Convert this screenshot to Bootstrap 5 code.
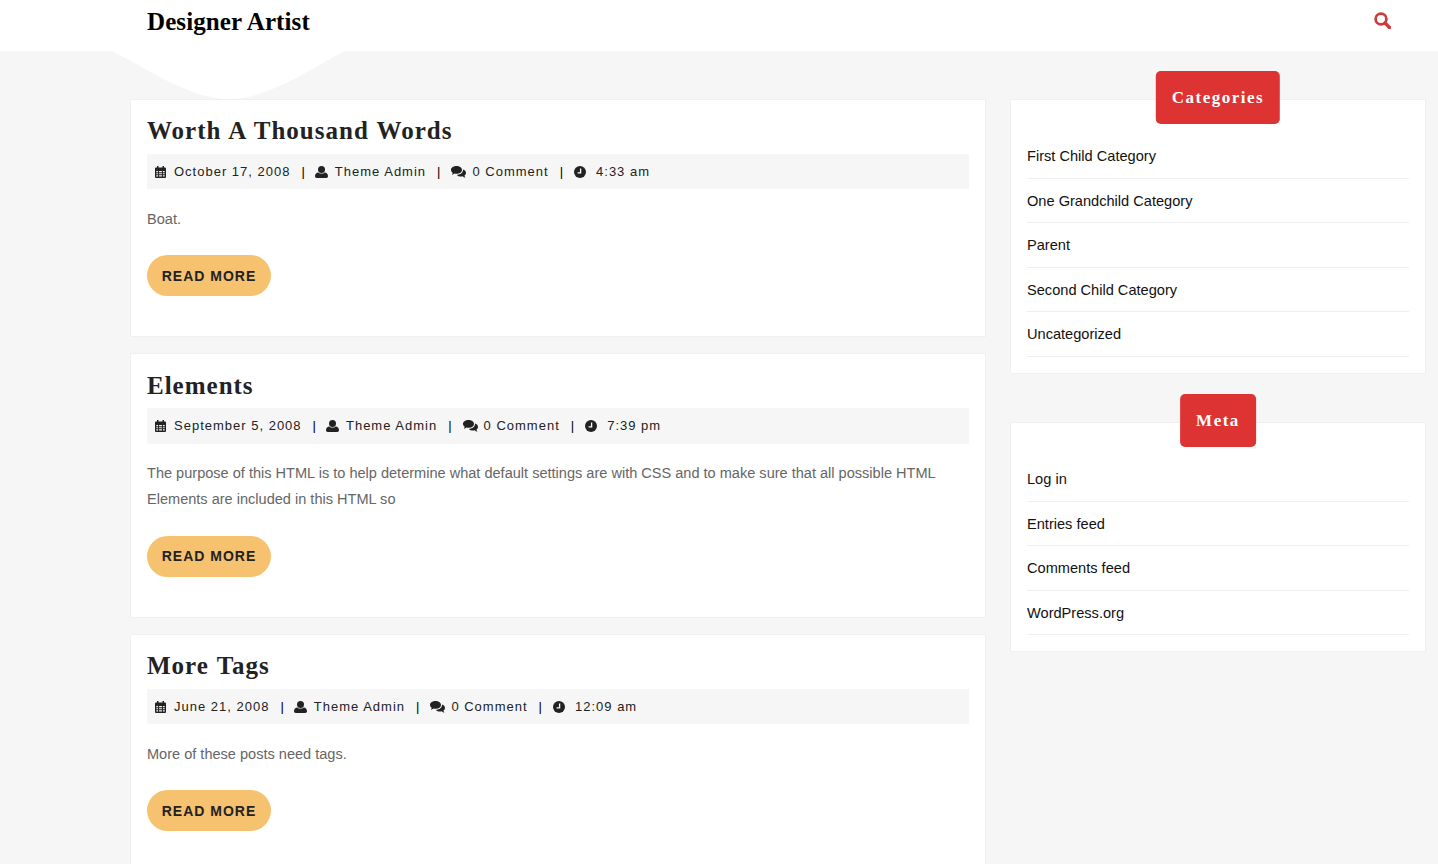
<!DOCTYPE html>
<html lang="en">
<head>
<meta charset="utf-8">
<title>Designer Artist</title>
<link href="https://cdn.jsdelivr.net/npm/bootstrap@5.3.0/dist/css/bootstrap.min.css" rel="stylesheet">
<style>
html,body{height:864px;overflow:hidden}
body{background:#f6f6f6;font-family:"Liberation Sans",Arial,sans-serif;color:#222}
.top-head{height:51px;background:#fff;padding:0 47px 0 147px}
.brand-name{font:700 25px/44px "Liberation Serif","Times New Roman",serif;color:#000;letter-spacing:.1px;text-decoration:none}
.search-ico{width:17px;height:17px;margin-top:12px;display:block}
.notch{position:absolute;left:112px;top:51px;width:233px;height:48px;display:block}
.page-wrap{position:relative;padding:48px 12px 0 130px;gap:24px}
.main-col{width:856px;flex:none}
.side-col{width:416px;flex:none}
.post-box{background:#fff;border:1px solid #f0f0f0;padding:16px 16px 0;margin-bottom:16px}
.post-box.b1{height:238px}.post-box.b2{height:265px}.post-box.b3{height:300px}
.post-title{font:700 25px/30px "Liberation Serif","Times New Roman",serif;letter-spacing:1px;word-spacing:1px;color:#222;margin:0 0 8px}
.meta-bar{background:#f6f6f6;height:35px;padding:0 8px;font-size:13px;letter-spacing:1px;color:#222;display:flex;align-items:center;white-space:nowrap;margin-bottom:17px}
.meta-bar svg{flex:none;display:block}
.meta-sep{margin:0 11px;font-size:13px;letter-spacing:0;color:#000}
.mi-1{margin-right:8px}
.mi-2{margin:0 7px 0 -1px}
.mi-c{margin-right:6px}
.mi-3{margin-right:10px}
.post-text{font-size:14.55px;line-height:26px;color:#666;margin:0 0 23px}
.more-btn{display:inline-block;width:124px;height:41px;line-height:42px;text-align:center;background:#f6c26f;border-radius:21px;color:#222;font-size:14px;font-weight:700;letter-spacing:1px;text-decoration:none}
.b2 .post-title{padding-top:1px;margin-bottom:7px;height:31px}
.b2 .meta-bar{height:36px;margin-bottom:16px}
.b2 .post-text{margin-bottom:24px}
.b2 .more-btn{line-height:41px}
.side-box{position:relative;background:#fff;border:1px solid #f0f0f0;padding:34px 16px 16px 16px;margin-bottom:48.5px}
.side-tab{position:absolute;top:-29px;left:50%;transform:translateX(-50%);height:53px;padding:0 16px;background:#dd3333;border-radius:5px;color:#fff;font:700 17px/53px "Liberation Serif","Times New Roman",serif;letter-spacing:1.5px;margin:0;white-space:nowrap}
.side-list{list-style:none;margin:0;padding:0}
.side-list li{height:44.5px;border-bottom:1px solid #eee;font-size:14.6px;line-height:44px}
.side-list a{color:#111;text-decoration:none}
</style>
</head>
<body>
<header class="top-head d-flex justify-content-between align-items-start">
  <a class="brand-name" href="#">Designer Artist</a>
  <a href="#" aria-label="Search"><svg class="search-ico" viewBox="0 0 17 17"><circle cx="7" cy="7" r="5.400" fill="none" stroke="#cf3a3a" stroke-width="2.700"/><path d="M11 11l4.500 4.500" stroke="#cf3a3a" stroke-width="3.300" stroke-linecap="round"/></svg></a>
</header>
<svg class="notch" viewBox="0 0 233 48" aria-hidden="true"><path d="M0 0C38 19 78 48 117 48C156 48 196 19 233 0Z" fill="#fff"/></svg>

<svg width="0" height="0" class="position-absolute" aria-hidden="true">
  <symbol id="i-cal" viewBox="0 0 11 12"><path fill="#222" fill-rule="evenodd" d="M2 0h1.500v1.500h4V0H9v1.500h1a1 1 0 0 1 1 1V11a1 1 0 0 1-1 1H1a1 1 0 0 1-1-1V2.500a1 1 0 0 1 1-1h1zM1.300 5v1.200h1.800V5zm2.800 0v1.200h2.800V5zm3.800 0v1.200h1.800V5zM1.300 7.200v1.100h1.800V7.200zm2.800 0v1.100h2.800V7.200zm3.800 0v1.100h1.800V7.200zM1.300 9.300v1.200h1.800V9.300zm2.800 0v1.200h2.800V9.300zm3.800 0v1.200h1.800V9.300z"/></symbol>
  <symbol id="i-user" viewBox="0 0 13 12"><circle cx="6.500" cy="3.500" r="3.500" fill="#222"/><path fill="#222" d="M3.300 6.400C4.200 7.200 5.300 7.600 6.500 7.600S8.800 7.200 9.700 6.400C11.800 6.600 13 8 13 10.300C13 11.400 12.300 12 11.200 12H1.800C.7 12 0 11.400 0 10.300C0 8 1.200 6.600 3.300 6.400Z"/></symbol>
  <symbol id="i-com" viewBox="0 0 15 12"><path fill="#222" d="M5.500 0C8.500 0 11 1.700 11 3.900S8.500 7.800 5.500 7.800C4.800 7.800 4.200 7.700 3.600 7.500C2.800 8.100 1.900 8.500.8 8.700C1.300 8 1.600 7.400 1.700 6.700C.7 6 0 5 0 3.900C0 1.700 2.500 0 5.500 0Z"/><path fill="#222" d="M12 3.600C13.800 4.200 15 5.500 15 7C15 8 14.400 8.900 13.500 9.500C13.600 10.300 14 11 14.500 11.700C13.400 11.500 12.400 11 11.600 10.300C11.100 10.400 10.600 10.500 10 10.500C8.300 10.500 6.800 9.900 5.900 8.900C9.500 8.800 12.300 6.700 12 3.600Z"/></symbol>
  <symbol id="i-clock" viewBox="0 0 12 12"><circle cx="6" cy="6" r="6" fill="#222"/><path d="M6.600 2.400V6.800H3.600" fill="none" stroke="#fff" stroke-width="1.300"/></symbol>
</svg>

<div class="page-wrap d-flex align-items-start">
  <main class="main-col">
    <article class="post-box b1">
      <h2 class="post-title">Worth A Thousand Words</h2>
      <div class="meta-bar">
        <svg class="mi-1" width="11" height="12"><use href="#i-cal"/></svg><span>October 17, 2008</span><span class="meta-sep">|</span>
        <svg class="mi-2" width="13" height="12"><use href="#i-user"/></svg><span>Theme Admin</span><span class="meta-sep">|</span>
        <svg class="mi-c" width="15" height="12"><use href="#i-com"/></svg><span>0 Comment</span><span class="meta-sep">|</span>
        <svg class="mi-3" width="12" height="12"><use href="#i-clock"/></svg><span>4:33 am</span>
      </div>
      <p class="post-text">Boat.</p>
      <a class="more-btn" href="#">READ MORE</a>
    </article>
    <article class="post-box b2">
      <h2 class="post-title">Elements</h2>
      <div class="meta-bar">
        <svg class="mi-1" width="11" height="12"><use href="#i-cal"/></svg><span>September 5, 2008</span><span class="meta-sep">|</span>
        <svg class="mi-2" width="13" height="12"><use href="#i-user"/></svg><span>Theme Admin</span><span class="meta-sep">|</span>
        <svg class="mi-c" width="15" height="12"><use href="#i-com"/></svg><span>0 Comment</span><span class="meta-sep">|</span>
        <svg class="mi-3" width="12" height="12"><use href="#i-clock"/></svg><span>7:39 pm</span>
      </div>
      <p class="post-text">The purpose of this HTML is to help determine what default settings are with CSS and to make sure that all possible HTML Elements are included in this HTML so</p>
      <a class="more-btn" href="#">READ MORE</a>
    </article>
    <article class="post-box b3">
      <h2 class="post-title">More Tags</h2>
      <div class="meta-bar">
        <svg class="mi-1" width="11" height="12"><use href="#i-cal"/></svg><span>June 21, 2008</span><span class="meta-sep">|</span>
        <svg class="mi-2" width="13" height="12"><use href="#i-user"/></svg><span>Theme Admin</span><span class="meta-sep">|</span>
        <svg class="mi-c" width="15" height="12"><use href="#i-com"/></svg><span>0 Comment</span><span class="meta-sep">|</span>
        <svg class="mi-3" width="12" height="12"><use href="#i-clock"/></svg><span>12:09 am</span>
      </div>
      <p class="post-text">More of these posts need tags.</p>
      <a class="more-btn" href="#">READ MORE</a>
    </article>
  </main>
  <aside class="side-col">
    <section class="side-box">
      <h3 class="side-tab">Categories</h3>
      <ul class="side-list">
        <li><a href="#">First Child Category</a></li>
        <li><a href="#">One Grandchild Category</a></li>
        <li><a href="#">Parent</a></li>
        <li><a href="#">Second Child Category</a></li>
        <li><a href="#">Uncategorized</a></li>
      </ul>
    </section>
    <section class="side-box">
      <h3 class="side-tab">Meta</h3>
      <ul class="side-list">
        <li><a href="#">Log in</a></li>
        <li><a href="#">Entries feed</a></li>
        <li><a href="#">Comments feed</a></li>
        <li><a href="#">WordPress.org</a></li>
      </ul>
    </section>
  </aside>
</div>
<script src="https://cdn.jsdelivr.net/npm/bootstrap@5.3.0/dist/js/bootstrap.bundle.min.js"></script>
</body>
</html>
